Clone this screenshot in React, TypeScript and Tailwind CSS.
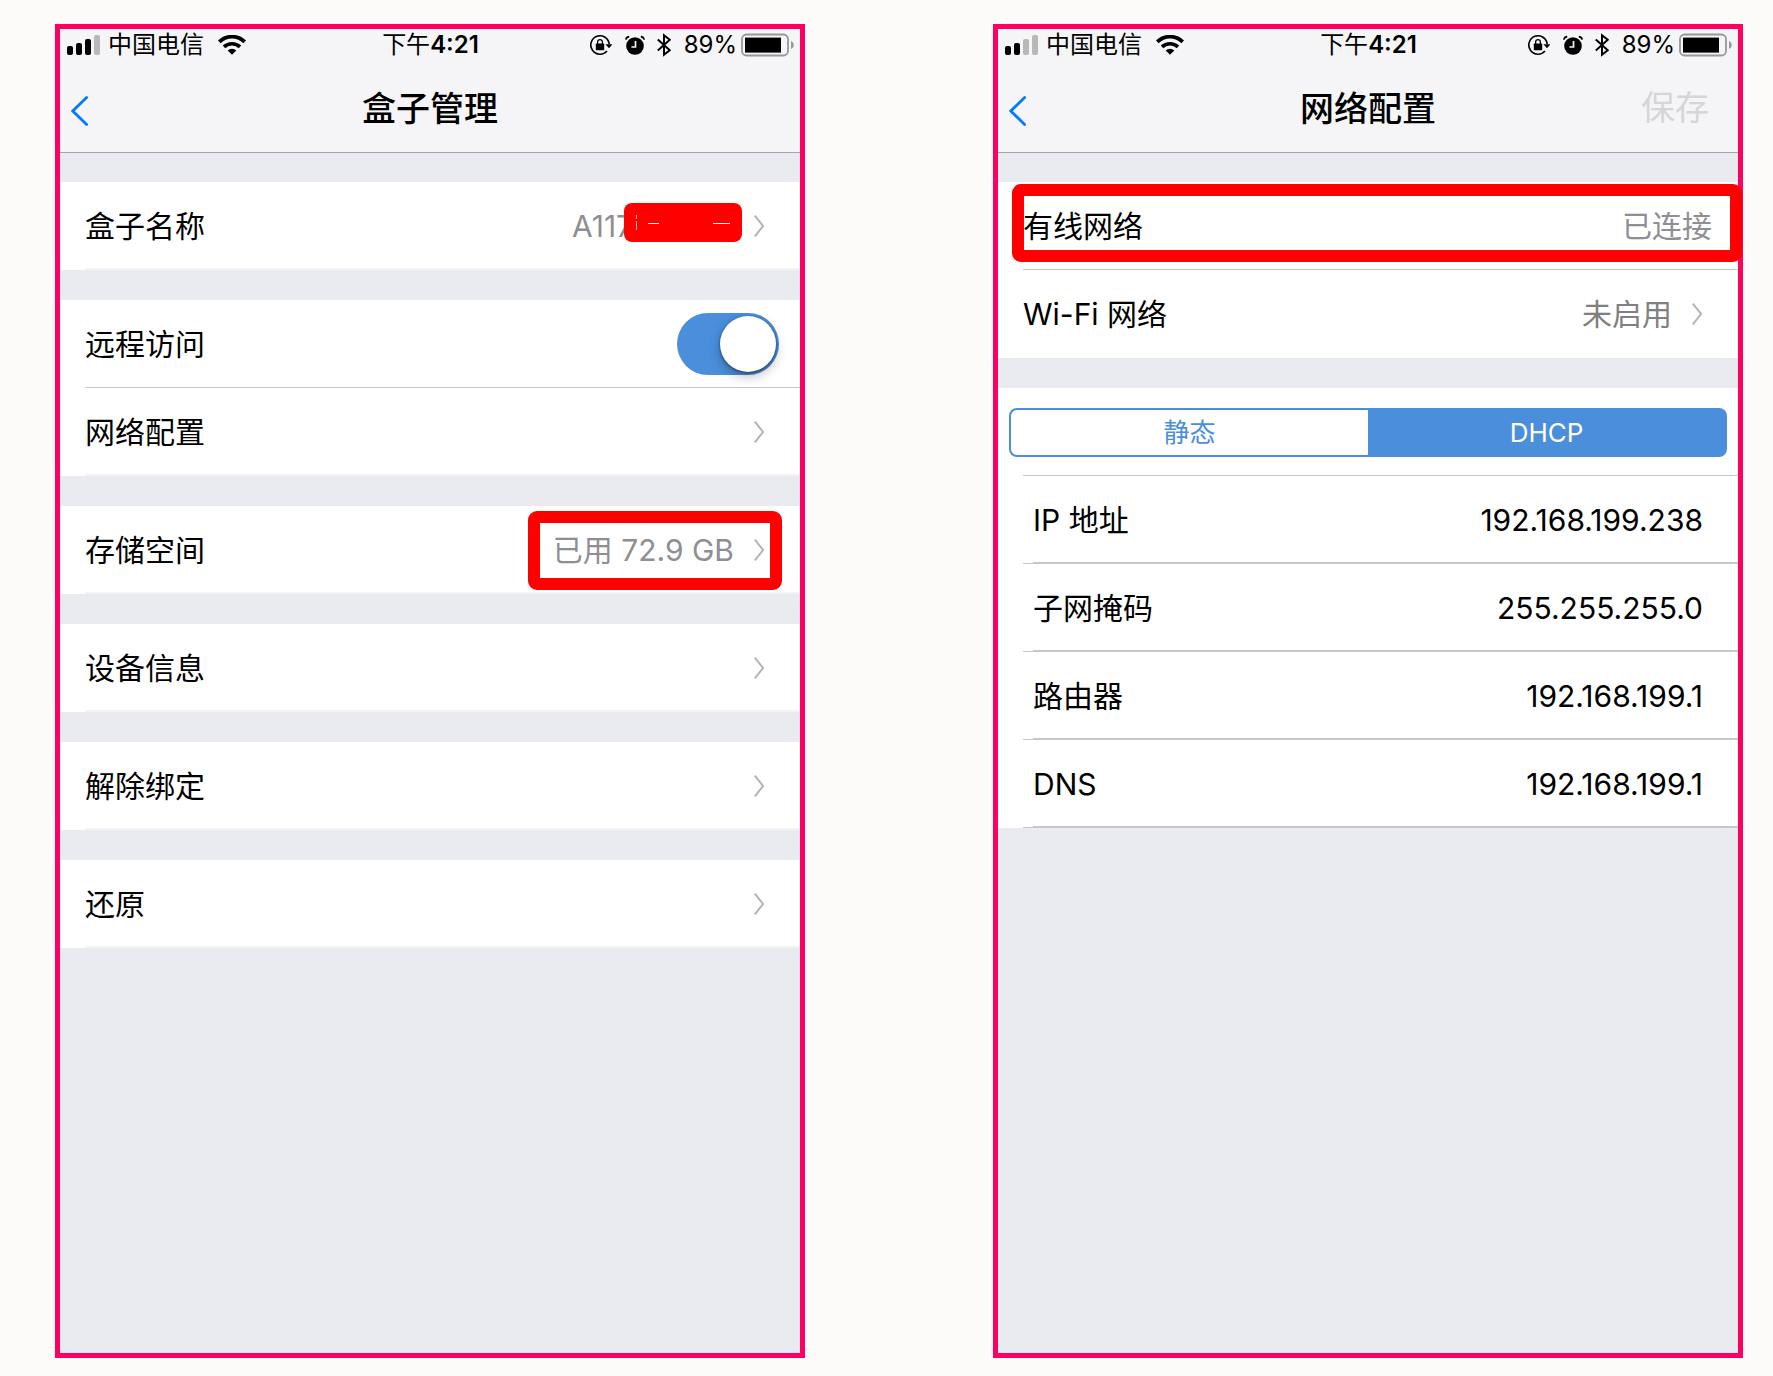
import { useState, type ReactNode } from 'react';

const SIGNAL_BARS = [
  { x: 0, height: 9 },
  { x: 9, height: 12 },
  { x: 18, height: 16 },
  { x: 27, height: 20 },
];

const DHCP_FIELDS = [
  { label: 'IP 地址', value: '192.168.199.238' },
  { label: '子网掩码', value: '255.255.255.0' },
  { label: '路由器', value: '192.168.199.1' },
  { label: 'DNS', value: '192.168.199.1' },
];

function SignalIcon({ strength }: { strength: number }) {
  return (
    <svg className="h-5 w-[33px]" viewBox="0 0 33 20" aria-hidden="true">
      {SIGNAL_BARS.map((bar, i) => (
        <rect
          key={bar.x}
          x={bar.x}
          y={20 - bar.height}
          width="6"
          height={bar.height}
          rx="2"
          fill={i < strength ? '#000' : '#b8b8b9'}
        />
      ))}
    </svg>
  );
}

function WifiIcon() {
  return (
    <svg className="h-5 w-7" viewBox="0 0 28 20" fill="none" stroke="#000" aria-hidden="true">
      <path d="M1.3 6.9a18 18 0 0 1 25.4 0" strokeWidth="3.8" />
      <path d="M6 11.9a11.6 11.6 0 0 1 16 0" strokeWidth="3.6" />
      <path d="M14 19.8l-4.3-4.3a6 6 0 0 1 8.6 0z" fill="#000" stroke="none" />
    </svg>
  );
}

function RotationLockIcon() {
  return (
    <svg className="h-5 w-[22px]" viewBox="0 0 22 20" aria-hidden="true">
      <path d="M17 16A9.2 9.2 0 1 1 19.2 9.2" fill="none" stroke="#000" strokeWidth="1.6" />
      <path d="M15.4 9.2H22.400L19 13.200z" fill="#000" />
      <rect x="5.8" y="8.4" width="8.4" height="6.8" rx="0.8" fill="#000" />
      <path d="M7.6 9V7a2.4 2.4 0 0 1 4.8 0v2" fill="none" stroke="#000" strokeWidth="1.3" />
    </svg>
  );
}

function AlarmIcon() {
  return (
    <svg className="h-5 w-5" viewBox="0 0 20 20" aria-hidden="true">
      <circle cx="10" cy="11" r="8.8" fill="#000" />
      <path d="M10.500 6v6H6.400" fill="none" stroke="#f5f5f7" strokeWidth="1.7" />
      <path d="M.8 4.6C1.2 2.8 2.4 1.8 4.2 1.6M19.2 4.6c-.4-1.8-1.6-2.8-3.400-3" fill="none" stroke="#000" strokeWidth="1.7" />
    </svg>
  );
}

function BluetoothIcon() {
  return (
    <svg className="h-6 w-[14px]" viewBox="0 0 14 24" fill="none" stroke="#000" strokeWidth="2" aria-hidden="true">
      <path d="M.8 6.600l12 10.600L7 21.800V2.200l5.800 4.600L.8 17.400" />
    </svg>
  );
}

function BatteryIcon() {
  return (
    <svg className="h-6 w-[53px]" viewBox="0 0 53 24" aria-hidden="true">
      <rect x="1" y="1.5" width="46" height="21" rx="4.5" fill="none" stroke="#98989a" strokeWidth="1.8" />
      <rect x="4" y="4.6" width="36" height="15" fill="#000" />
      <path d="M50 8c3.6 1.2 3.6 6.8 0 8z" fill="#98989a" />
    </svg>
  );
}

function ChevronRight() {
  return (
    <svg className="h-[22px] w-[10px] shrink-0" viewBox="0 0 10 22" fill="none" stroke="#b4b4b6" strokeWidth="2" aria-hidden="true">
      <path d="M.8.6L9.2 11 .8 21.4" />
    </svg>
  );
}

function Phone({
  title,
  signal,
  action,
  children,
}: {
  title: string;
  signal: number;
  action?: ReactNode;
  children: ReactNode;
}) {
  return (
    <section className="min-w-0 flex-1 border-[5px] border-[#ff0060] bg-[#eaebf0]">
      <header className="border-b border-[#a4a4a8] bg-[#f5f5f7]">
        <div className="mb-1 grid h-[31px] grid-cols-[1fr_auto_1fr] items-center pr-[6px] pl-[7px] text-2xl leading-none">
          <div className="flex items-center">
            <SignalIcon strength={signal} />
            <span className="mr-[14px] ml-2">中国电信</span>
            <WifiIcon />
          </div>
          <span>
            下午<span className="font-semibold">4:21</span>
          </span>
          <div className="flex items-center justify-end">
            <RotationLockIcon />
            <span className="mr-3 ml-[13px]">
              <AlarmIcon />
            </span>
            <BluetoothIcon />
            <span className="mr-1 ml-[13px]">89%</span>
            <BatteryIcon />
          </div>
        </div>
        <div className="grid h-[88px] grid-cols-[1fr_auto_1fr] items-center px-[11px] pt-[2px]">
          <button type="button" aria-label="返回" className="mt-1 justify-self-start">
            <svg className="h-[30px] w-[18px]" viewBox="0 0 18 30" fill="none" stroke="#007aff" strokeWidth="2.8" strokeLinecap="round">
              <path d="M15.6 1.6L1.8 15l13.8 13.4" />
            </svg>
          </button>
          <h1 className="text-[34px] leading-none font-medium">{title}</h1>
          <div className="justify-self-end">{action}</div>
        </div>
      </header>
      <div className="flex flex-col gap-[30px] pt-[29px]">{children}</div>
    </section>
  );
}

function LinkRow({ label, children, last }: { label: string; children?: ReactNode; last?: boolean }) {
  return (
    <div className="bg-white pl-[25px]">
      <button
        type="button"
        className={`flex h-[88px] w-full items-center gap-5 pr-9 text-left ${last ? 'border-b-2 border-[#f2f2f4] pt-[2px]' : ''}`}
      >
        <span className="mr-auto">{label}</span>
        {children}
        <ChevronRight />
      </button>
    </div>
  );
}

function RemoteAccessRow() {
  const [enabled, setEnabled] = useState(true);

  return (
    <div className="bg-white pl-[25px]">
      <label className="flex h-[88px] items-center justify-between border-b border-[#c8c8cc] pr-[21px]">
        <span>远程访问</span>
        <input
          type="checkbox"
          role="switch"
          className="peer sr-only"
          checked={enabled}
          onChange={(e) => setEnabled(e.target.checked)}
        />
        <span className="flex h-[62px] w-[102px] items-center rounded-full bg-gray-300 p-[3px] peer-checked:justify-end peer-checked:bg-[#4a8edc]">
          <span className="h-14 w-14 rounded-full bg-white shadow-[0_5px_12px_rgba(0,0,0,0.25),0_1px_3px_rgba(0,0,0,0.5)]" />
        </span>
      </label>
    </div>
  );
}

function BoxSettings() {
  return (
    <Phone title="盒子管理" signal={3}>
      <LinkRow label="盒子名称" last>
        <span className="relative w-[162px] text-[#8e8e93]">
          A117
          <span className="absolute -top-[5px] -right-2 h-[39px] w-[118px] rounded-lg bg-[#ff0000]">
            <svg className="h-full w-full" viewBox="0 0 118 39" stroke="#fff" aria-hidden="true">
              <path d="M12.5 12v4M12.5 18v9" strokeOpacity="0.7" />
              <path d="M24 20.5h11M89 20.5h17" />
            </svg>
          </span>
        </span>
      </LinkRow>
      <div>
        <RemoteAccessRow />
        <LinkRow label="网络配置" last />
      </div>
      <div className="relative">
        <LinkRow label="存储空间" last>
          <span className="text-[#8e8e93]">已用 72.9 GB</span>
        </LinkRow>
        <div className="pointer-events-none absolute top-[5px] right-[18px] h-[79px] w-[254px] rounded-[9px] border-[12px] border-[#ff0000]" />
      </div>
      <LinkRow label="设备信息" last />
      <LinkRow label="解除绑定" last />
      <LinkRow label="还原" last />
    </Phone>
  );
}

function ModeSwitch() {
  const [mode, setMode] = useState('DHCP');

  return (
    <div className="bg-white pl-[25px]">
      <div className="flex h-[88px] items-center border-b border-[#c8c8cc] pt-[2px] pr-[11px]">
        <div className="-ml-[14px] flex h-[49px] flex-1 text-[26px] leading-none">
          {['静态', 'DHCP'].map((name) => (
            <button
              key={name}
              type="button"
              aria-pressed={mode === name}
              onClick={() => setMode(name)}
              className={`flex-1 border-2 border-[#4a8edc] first:rounded-l-lg first:border-r-0 last:rounded-r-lg last:border-l-0 ${
                mode === name ? 'bg-[#4a8edc] text-white' : 'bg-white text-[#4a8edc]'
              }`}
            >
              {name}
            </button>
          ))}
        </div>
      </div>
    </div>
  );
}

function NetworkSettings() {
  return (
    <Phone
      title="网络配置"
      signal={2}
      action={
        <button type="button" disabled className="mr-[18px] text-[34px] leading-none text-[#d6d6d8]">
          保存
        </button>
      }
    >
      <div>
        <div className="relative bg-white pl-[25px]">
          <div className="flex h-[88px] items-center justify-between border-b border-[#c8c8cc] pr-[26px]">
            <span>有线网络</span>
            <span className="text-[#8e8e93]">已连接</span>
          </div>
          <div className="pointer-events-none absolute top-[2px] -right-1 left-[14px] h-[78px] rounded-[9px] border-[12px] border-[#ff0000]" />
        </div>
        <LinkRow label="Wi-Fi 网络">
          <span className="text-[#808080]">未启用</span>
        </LinkRow>
      </div>
      <div>
        <ModeSwitch />
        <dl className="bg-white pl-[25px]">
          {DHCP_FIELDS.map((field) => (
            <div key={field.label} className="border-b border-[#c7c7cc] pl-[10px]">
              <div className="flex h-[87px] items-center justify-between border-b border-[#c7c7cc] pt-[2px] pr-[35px]">
                <dt>{field.label}</dt>
                <dd>{field.value}</dd>
              </div>
            </div>
          ))}
        </dl>
      </div>
    </Phone>
  );
}

export default function App() {
  return (
    <main className="flex min-h-screen gap-[188px] bg-[#fcfbf9] pt-6 pr-[30px] pb-[18px] pl-[55px] font-[Inter,'Noto_Sans_CJK_SC',sans-serif] text-[30px] leading-9 text-black">
      <BoxSettings />
      <NetworkSettings />
    </main>
  );
}
